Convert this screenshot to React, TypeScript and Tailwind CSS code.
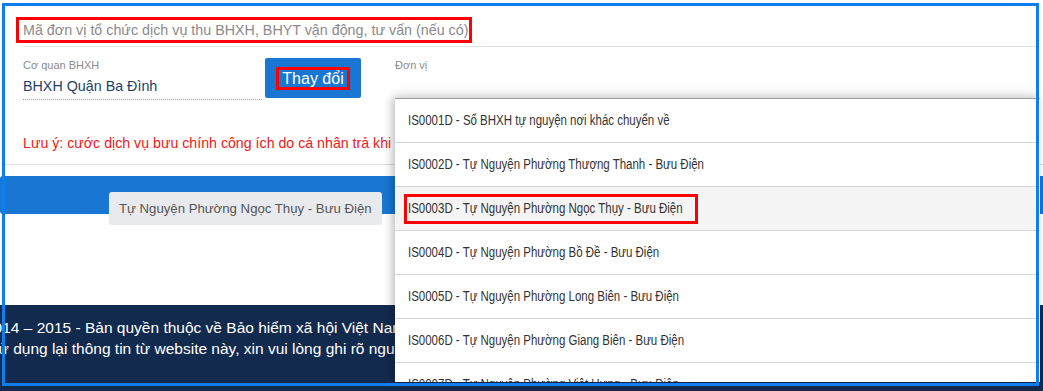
import React from 'react';

const items = [
  'IS0001D - Sổ BHXH tự nguyện nơi khác chuyển về',
  'IS0002D - Tự Nguyện Phường Thượng Thanh - Bưu Điện',
  'IS0003D - Tự Nguyện Phường Ngọc Thụy - Bưu Điện',
  'IS0004D - Tự Nguyện Phường Bồ Đề - Bưu Điện',
  'IS0005D - Tự Nguyện Phường Long Biên - Bưu Điện',
  'IS0006D - Tự Nguyện Phường Giang Biên - Bưu Điện',
  'IS0007D - Tự Nguyện Phường Việt Hưng - Bưu Điện',
];

function DonViMenu() {
  return (
    <div className="absolute left-[395px] top-[98px] w-[645px] h-[284px] overflow-hidden bg-white border-t border-[#9e9e9e] shadow-[-4px_0_8px_rgba(0,0,0,0.18),0_-6px_10px_rgba(0,0,0,0.08)]">
      {items.map((it, i) => {
        const active = i === 2;
        return (
          <div
            key={it}
            className={`h-[44px] flex items-center pl-[9px] border-b border-[#d6d6d6] ${active ? 'bg-[#f4f4f4]' : ''}`}
          >
            <div
              className={`w-[294px] h-[30px] pl-[1px] flex items-center border-[3px] ${
                active ? 'border-[#f00]' : 'border-transparent'
              }`}
            >
              <span className="inline-block whitespace-nowrap origin-left scale-x-[0.82] text-[14px] text-[#333]">
                {it}
              </span>
            </div>
          </div>
        );
      })}
    </div>
  );
}

export default function App() {
  return (
    <div className="relative w-[1043px] h-[391px] overflow-hidden bg-white font-['Liberation_Sans',Arial,sans-serif]">
      <div className="flex flex-col h-full">
        {/* ma don vi */}
        <div className="pl-[16px] pt-[17px] pr-[3px]">
          <span className="inline-block border-[3px] border-[#f00] pl-[4px] pr-[1px] h-[26px] leading-[20px] text-[14.3px] text-[#8a8a8a]">
            Mã đơn vị tổ chức dịch vụ thu BHXH, BHYT vận động, tư vấn (nếu có)
          </span>
          <div className="ml-[7px] mt-[3px] border-b border-[#e2e2e2]" />
        </div>

        {/* co quan / don vi */}
        <div className="flex pl-[23px] pt-[11px] h-[53px]">
          <div className="w-[239px] border-b border-dotted border-[#9a9a9a]">
            <div className="text-[11px] text-[#8c8c8c] leading-[13px] mt-[1px]">Cơ quan BHXH</div>
            <div className="text-[14.3px] text-[#1d3f6b] leading-[18px] mt-[5px]">BHXH Quận Ba Đình</div>
          </div>
          <div className="ml-[3px] w-[96px] h-[40px] rounded-[2px] bg-[#1976d2] flex items-center justify-center">
            <span className="border-[3px] border-[#f00] px-[3px] text-[16px] leading-[17px] text-white">Thay đổi</span>
          </div>
          <div className="ml-[34px] text-[11px] text-[#8c8c8c] leading-[13px] mt-[1px]">Đơn vị</div>
        </div>

        {/* luu y */}
        <div className="pl-[23px] pt-[35px] text-[14.2px] leading-[16px] text-[#f51616] whitespace-nowrap">
          Lưu ý: cước dịch vụ bưu chính công ích do cá nhân trả khi nhận kết quả
        </div>
        <div className="ml-[5px] mt-[13px] border-b border-[#e0e0e0]" />

        {/* thanh xanh */}
        <div className="mt-[11px] h-[38px] bg-[#1976d2] rounded-l-[3px]" />
        <div className="h-[91px] bg-white relative">
          <div className="absolute left-[109px] top-[-22px] h-[33px] px-[10px] rounded-[3px] bg-[#e9eaed] text-[13.2px] text-[#555] flex items-center">
            Tự Nguyện Phường Ngọc Thụy - Bưu Điện
          </div>
        </div>

        {/* footer */}
        <div className="flex-1 bg-[#132a4f] text-white text-[15.5px] leading-[21px] pt-[12px] whitespace-nowrap">
          <div className="ml-[-15px]">2014 – 2015 - Bản quyền thuộc về Bảo hiểm xã hội Việt Nam</div>
          <div className="ml-[-36px]">Khi sử dụng lại thông tin từ website này, xin vui lòng ghi rõ nguồn</div>
        </div>
      </div>

      <DonViMenu />

      {/* khung chu thich */}
      <div className="absolute left-[2px] top-[3px] w-[1037px] h-[383px] border-[3px] border-[#0c7ef0] pointer-events-none" />
    </div>
  );
}
